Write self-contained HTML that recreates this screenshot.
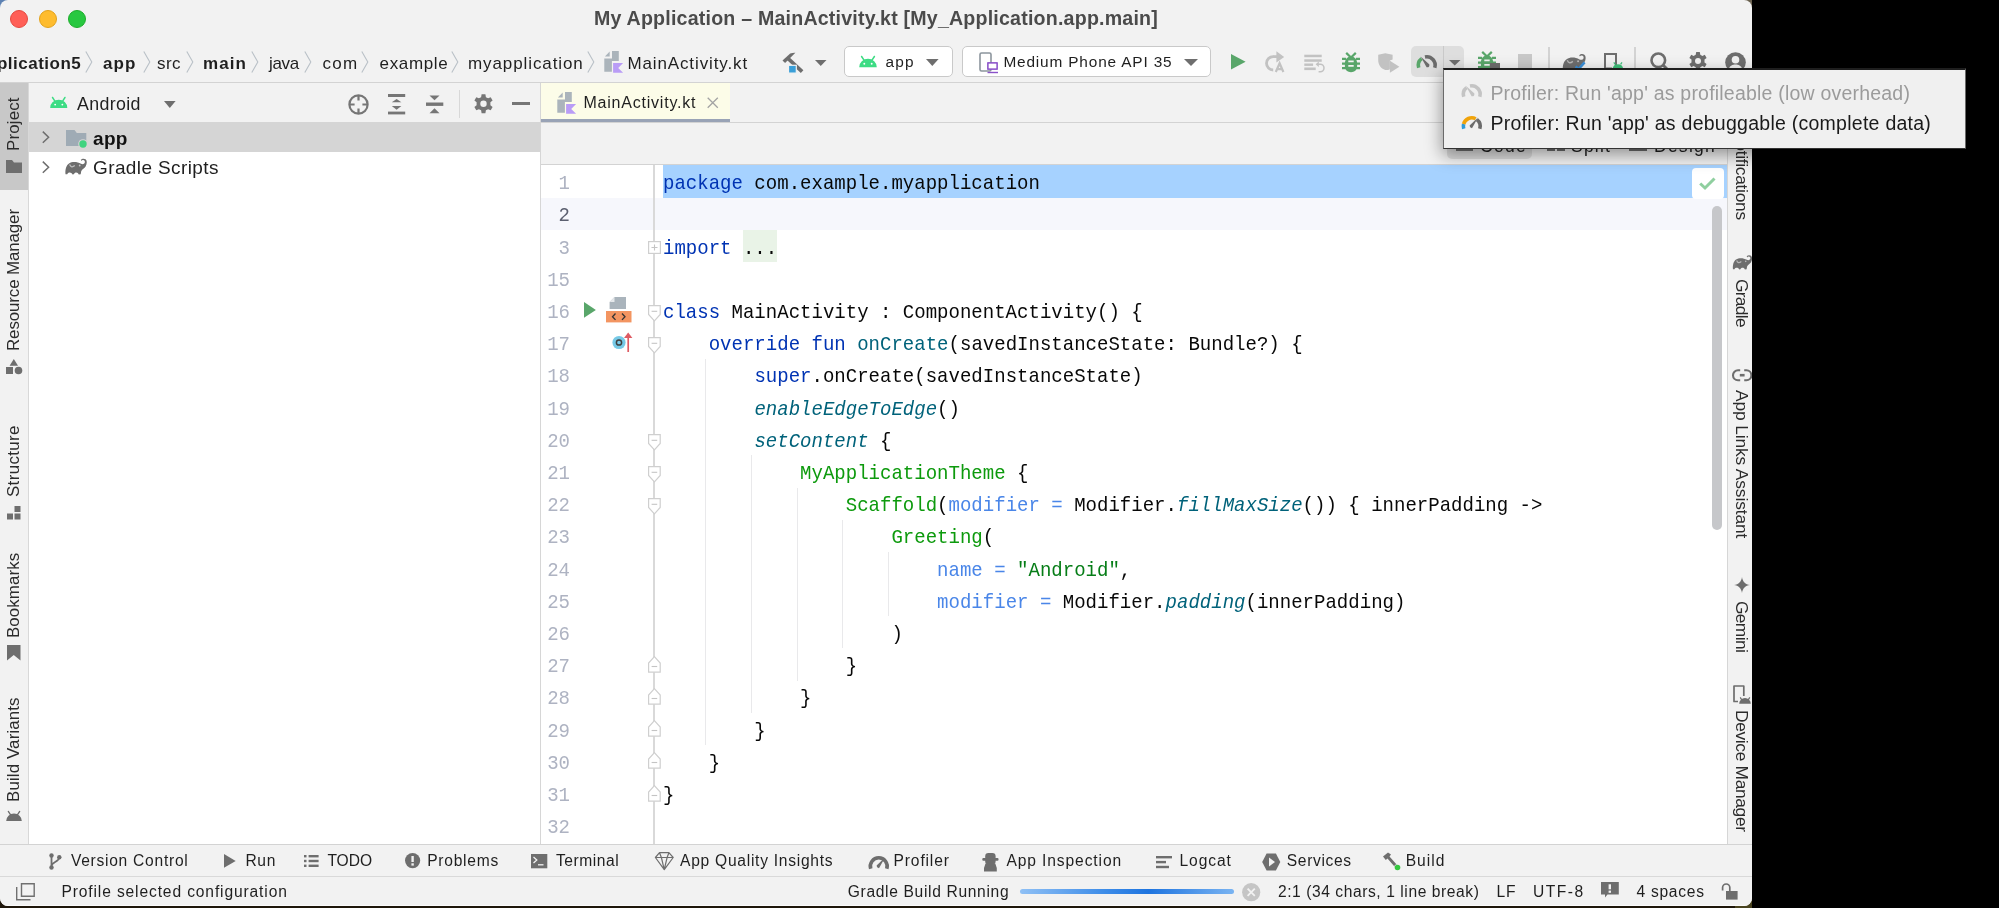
<!DOCTYPE html>
<html><head><meta charset="utf-8">
<style>
*{box-sizing:border-box;margin:0;padding:0}
html,body{width:1999px;height:908px;overflow:hidden;background:#000}
body{position:relative;font-family:"Liberation Sans",sans-serif;color:#1f1f1f}
.a{position:absolute;white-space:nowrap}
svg.a{overflow:visible}
#win{will-change:transform;position:absolute;left:0;top:0;width:1752px;height:906px;background:#f2f2f2;border-radius:8px;overflow:hidden}
.code{position:absolute;font-family:"Liberation Mono",monospace;font-size:19.05px;line-height:32.2px;white-space:pre;color:#080808;transform:scaleY(1.1);transform-origin:0 21.1px}
.kw{color:#0033b3}.fn{color:#00627a}.it{font-style:italic}.cm{color:#0d9a0d}.na{color:#4a86e8}.st{color:#067d17}
.ln{position:absolute;left:520px;width:50px;text-align:right;font-family:"Liberation Mono",monospace;font-size:19.05px;line-height:32.2px;color:#aeb3c2;transform:scaleY(1.1);transform-origin:0 21.1px}
.guide{position:absolute;width:1px;background:#e8e8ea}
</style></head><body>
<div class="a" style="left:0;top:0;width:1752px;height:908px;background:#1f170b"></div><div class="a" style="left:1700px;top:0;width:52px;height:30px;background:#6b6250"></div><div class="a" style="left:1735px;top:880px;width:17px;height:28px;background:#4a4420"></div>
<div class="a" style="left:0;top:0;width:40px;height:30px;background:#5d82b3"></div>
<div id="win">
<div class="a" style="left:10px;top:10px;width:18px;height:18px;border-radius:50%;background:#ff5f57;border:1px solid #e5483f"></div><div class="a" style="left:39px;top:10px;width:18px;height:18px;border-radius:50%;background:#febc2e;border:1px solid #e3a21a"></div><div class="a" style="left:68px;top:10px;width:18px;height:18px;border-radius:50%;background:#28c840;border:1px solid #1dad2b"></div><div class="a" style="font:normal bold 19.6px/19.6px 'Liberation Sans';color:#4b4b4b;letter-spacing:0.208px;left:594.00px;top:9.00px;">My Application – MainActivity.kt [My_Application.app.main]</div><div class="a" style="left:0px;top:82px;width:1752px;height:1px;background:#d3d3d3;"></div><div class="a" style="font:normal bold 17px/17px 'Liberation Sans';color:#1f1f1f;letter-spacing:0.500px;left:-3.09px;top:55.00px;">plication5</div><svg class="a" style="left:85px;top:51px;" width="8" height="22" viewBox="0 0 8 22"><path d="M0.8 0.5L6.8 11.0L0.8 21.5" fill="none" stroke="#b9c0c7" stroke-width="1.1"/></svg><div class="a" style="font:normal bold 17px/17px 'Liberation Sans';color:#1f1f1f;letter-spacing:1.081px;left:103.00px;top:55.00px;">app</div><svg class="a" style="left:143px;top:51px;" width="8" height="22" viewBox="0 0 8 22"><path d="M0.8 0.5L6.8 11.0L0.8 21.5" fill="none" stroke="#b9c0c7" stroke-width="1.1"/></svg><div class="a" style="font:normal normal 17px/17px 'Liberation Sans';color:#1f1f1f;letter-spacing:0.419px;left:157.00px;top:55.00px;">src</div><svg class="a" style="left:186px;top:51px;" width="8" height="22" viewBox="0 0 8 22"><path d="M0.8 0.5L6.8 11.0L0.8 21.5" fill="none" stroke="#b9c0c7" stroke-width="1.1"/></svg><div class="a" style="font:normal bold 17px/17px 'Liberation Sans';color:#1f1f1f;letter-spacing:1.069px;left:203.00px;top:55.00px;">main</div><svg class="a" style="left:251px;top:51px;" width="8" height="22" viewBox="0 0 8 22"><path d="M0.8 0.5L6.8 11.0L0.8 21.5" fill="none" stroke="#b9c0c7" stroke-width="1.1"/></svg><div class="a" style="font:normal normal 17px/17px 'Liberation Sans';color:#1f1f1f;letter-spacing:-0.344px;left:269.00px;top:55.00px;">java</div><svg class="a" style="left:304px;top:51px;" width="8" height="22" viewBox="0 0 8 22"><path d="M0.8 0.5L6.8 11.0L0.8 21.5" fill="none" stroke="#b9c0c7" stroke-width="1.1"/></svg><div class="a" style="font:normal normal 17px/17px 'Liberation Sans';color:#1f1f1f;letter-spacing:1.273px;left:322.40px;top:55.00px;">com</div><svg class="a" style="left:361.4px;top:51px;" width="8" height="22" viewBox="0 0 8 22"><path d="M0.8 0.5L6.8 11.0L0.8 21.5" fill="none" stroke="#b9c0c7" stroke-width="1.1"/></svg><div class="a" style="font:normal normal 17px/17px 'Liberation Sans';color:#1f1f1f;letter-spacing:0.650px;left:379.60px;top:55.00px;">example</div><svg class="a" style="left:450.5px;top:51px;" width="8" height="22" viewBox="0 0 8 22"><path d="M0.8 0.5L6.8 11.0L0.8 21.5" fill="none" stroke="#b9c0c7" stroke-width="1.1"/></svg><div class="a" style="font:normal normal 17px/17px 'Liberation Sans';color:#1f1f1f;letter-spacing:0.901px;left:468.00px;top:55.00px;">myapplication</div><svg class="a" style="left:587px;top:51px;" width="8" height="22" viewBox="0 0 8 22"><path d="M0.8 0.5L6.8 11.0L0.8 21.5" fill="none" stroke="#b9c0c7" stroke-width="1.1"/></svg><svg class="a" style="left:604px;top:51px;" width="20" height="23" viewBox="0 0 20 23"><path d="M0.9 5.6L5.7 0.5V5.6Z" fill="#abb4bb"/><path d="M8 0.1H14.8V10H7.9V20.8H0.3V7.6H8Z" fill="#abb4bb"/><path d="M9.1 12.1H19.1L14.2 17L19.1 21.8H9.1Z" fill="#b99cf6"/></svg><div class="a" style="font:normal normal 17px/17px 'Liberation Sans';color:#1f1f1f;letter-spacing:0.882px;left:627.40px;top:55.00px;">MainActivity.kt</div><svg class="a" style="left:782px;top:52px;" width="22" height="22" viewBox="0 0 22 22"><path d="M0.5 8.5L8.2 1.4Q10.5 0.6 13.4 0.7L3.1 10.9Z" fill="#6e6e6e"/><path d="M6.6 4.6L21.4 18.3L18.8 21.1L4.2 7.3Z" fill="#6e6e6e"/><rect x="6.5" y="13.3" width="7.8" height="7.8" fill="#3a9fd8" stroke="#f2f2f2" stroke-width="1.2"/></svg><svg class="a" style="left:815px;top:59.5px;" width="11.5" height="6" viewBox="0 0 11.5 6"><path d="M0 0H11.5L5.75 6Z" fill="#6e6e6e"/></svg><div class="a" style="left:843.5px;top:45.5px;width:109px;height:31.5px;background:#fff;border:1px solid #c9c9c9;border-radius:5px"></div><svg class="a" style="left:859px;top:55.8px;" width="18" height="12.0" viewBox="0 0 18 12"><path d="M0.2 11.2A8.8 8.4 0 0 1 17.8 11.2Z" fill="#3ddc84"/><path d="M2.6 0.5L5 4.2M15.4 0.5L13 4.2" stroke="#3ddc84" stroke-width="1.5" stroke-linecap="round"/><circle cx="5.3" cy="7.8" r="0.95" fill="#fff"/><circle cx="12.7" cy="7.8" r="0.95" fill="#fff"/></svg><div class="a" style="font:normal normal 15.4px/15.4px 'Liberation Sans';color:#1f1f1f;letter-spacing:1.240px;left:885.40px;top:54.00px;">app</div><svg class="a" style="left:925.7px;top:59px;" width="12.6" height="7" viewBox="0 0 12.6 7"><path d="M0 0H12.6L6.3 7Z" fill="#6e6e6e"/></svg><div class="a" style="left:962px;top:45.5px;width:249px;height:31.5px;background:#fff;border:1px solid #c9c9c9;border-radius:5px"></div><svg class="a" style="left:979px;top:52px;" width="20" height="22" viewBox="0 0 20 22"><rect x="1" y="1" width="11" height="18" rx="1.5" fill="none" stroke="#8c959d" stroke-width="1.6"/><rect x="9" y="11" width="9" height="6" fill="#f2f2f2" stroke="#8a52c9" stroke-width="1.4"/><path d="M8.5 20.5H19" stroke="#8a52c9" stroke-width="1.4"/><rect x="9" y="11" width="9" height="6" fill="#fff" stroke="#8a52c9" stroke-width="1.3"/></svg><div class="a" style="font:normal normal 15.4px/15.4px 'Liberation Sans';color:#1f1f1f;letter-spacing:0.837px;left:1003.40px;top:54.00px;">Medium Phone API 35</div><svg class="a" style="left:1184px;top:59px;" width="14" height="7" viewBox="0 0 14 7"><path d="M0 0H14L7.0 7Z" fill="#6e6e6e"/></svg><div class="a" style="left:0px;top:83px;width:28px;height:761px;background:#f2f2f2;"></div><div class="a" style="left:0px;top:83px;width:28.5px;height:106.5px;background:#c8c8c8;"></div><div class="a" style="left:28px;top:83px;width:1.6px;height:762px;background:#d8d8d8;"></div><div class="a" style="font:normal normal 16.9px/16.9px 'Liberation Sans';color:#2b2b2b;letter-spacing:0.154px;left:6.00px;top:150.50px;transform:rotate(-90deg);transform-origin:0 0;">Project</div><svg class="a" style="left:6px;top:159.7px;" width="16" height="13" viewBox="0 0 16 13"><path d="M0 0H6L8 2.5H16V13H0Z" fill="#6e6e6e"/></svg><div class="a" style="font:normal normal 16.9px/16.9px 'Liberation Sans';color:#2b2b2b;letter-spacing:-0.108px;left:6.00px;top:351.00px;transform:rotate(-90deg);transform-origin:0 0;">Resource Manager</div><svg class="a" style="left:5.7px;top:359.2px;" width="17" height="16" viewBox="0 0 17 16"><path d="M7.8 0L12 6.8H3.6Z" fill="#6e6e6e"/><rect x="0" y="8" width="7" height="7" fill="#6e6e6e"/><circle cx="12.5" cy="11.5" r="3.8" fill="#6e6e6e"/></svg><div class="a" style="font:normal normal 16.9px/16.9px 'Liberation Sans';color:#2b2b2b;letter-spacing:0.358px;left:6.00px;top:497.00px;transform:rotate(-90deg);transform-origin:0 0;">Structure</div><svg class="a" style="left:7.2px;top:506.2px;" width="14" height="14" viewBox="0 0 14 14"><rect x="0" y="7.5" width="6" height="6" fill="#6e6e6e"/><rect x="7.5" y="7.5" width="6" height="6" fill="#6e6e6e"/><rect x="7.5" y="0" width="6" height="6" fill="#6e6e6e"/></svg><div class="a" style="font:normal normal 16.9px/16.9px 'Liberation Sans';color:#2b2b2b;letter-spacing:0.083px;left:6.00px;top:637.70px;transform:rotate(-90deg);transform-origin:0 0;">Bookmarks</div><svg class="a" style="left:7.2px;top:645.3px;" width="14" height="16" viewBox="0 0 14 16"><path d="M0 0H13.5V15.5L6.75 10L0 15.5Z" fill="#6e6e6e"/></svg><div class="a" style="font:normal normal 16.9px/16.9px 'Liberation Sans';color:#2b2b2b;letter-spacing:0.122px;left:6.00px;top:801.60px;transform:rotate(-90deg);transform-origin:0 0;">Build Variants</div><svg class="a" style="left:5.9px;top:810.6px;" width="16" height="10.666666666666666" viewBox="0 0 18 12"><path d="M0.2 11.2A8.8 8.4 0 0 1 17.8 11.2Z" fill="#6e6e6e"/><path d="M2.6 0.5L5 4.2M15.4 0.5L13 4.2" stroke="#6e6e6e" stroke-width="1.5" stroke-linecap="round"/><circle cx="5.3" cy="7.8" r="0.95" fill="#6e6e6e"/><circle cx="12.7" cy="7.8" r="0.95" fill="#6e6e6e"/></svg><div class="a" style="left:29px;top:83px;width:511px;height:39px;background:#f2f2f2;"></div><div class="a" style="left:29px;top:122px;width:511px;height:722px;background:#ffffff;"></div><div class="a" style="left:540px;top:83px;width:1px;height:762px;background:#d6d6d6;"></div><svg class="a" style="left:49.5px;top:96.6px;" width="17.5" height="11.666666666666666" viewBox="0 0 18 12"><path d="M0.2 11.2A8.8 8.4 0 0 1 17.8 11.2Z" fill="#3ddc84"/><path d="M2.6 0.5L5 4.2M15.4 0.5L13 4.2" stroke="#3ddc84" stroke-width="1.5" stroke-linecap="round"/><circle cx="5.3" cy="7.8" r="0.95" fill="#fff"/><circle cx="12.7" cy="7.8" r="0.95" fill="#fff"/></svg><div class="a" style="font:normal normal 17.8px/17.8px 'Liberation Sans';color:#1f1f1f;letter-spacing:0.367px;left:77.00px;top:96.00px;">Android</div><svg class="a" style="left:164px;top:101px;" width="11.6" height="7" viewBox="0 0 11.6 7"><path d="M0 0H11.6L5.8 7Z" fill="#6e6e6e"/></svg><svg class="a" style="left:348px;top:93.5px;" width="21" height="21" viewBox="0 0 21 21"><circle cx="10.5" cy="10.5" r="9.1" fill="none" stroke="#767676" stroke-width="2.2"/><path d="M10.5 1.2V6.6M10.5 14.4V19.8M1.2 10.5H6.6M14.4 10.5H19.8" stroke="#767676" stroke-width="2.2"/></svg><svg class="a" style="left:388px;top:93.5px;" width="18" height="21" viewBox="0 0 18 21"><rect x="0" y="0" width="17.2" height="3" fill="#767676"/><rect x="0" y="17.6" width="17.2" height="2.8" fill="#767676"/><path d="M3.8 8.3L8.6 4.9L13.4 8.3Z" fill="#767676"/><path d="M3.8 11.9L8.6 15.8L13.4 11.9Z" fill="#767676"/></svg><svg class="a" style="left:426px;top:94.5px;" width="18" height="19" viewBox="0 0 18 19"><path d="M3.5 0.4H13.5L8.5 5.2Z" fill="#767676"/><rect x="0" y="7.5" width="17.3" height="3.4" fill="#767676"/><path d="M3.5 18.3H13.5L8.5 13.3Z" fill="#767676"/></svg><div class="a" style="left:458.5px;top:89.7px;width:1.2px;height:28.3px;background:#d8d8d8;"></div><svg class="a" style="left:473.5px;top:94px;" width="19" height="19.5" viewBox="0 0 19 19.5"><g transform="translate(9.5 9.75)" fill="#767676"><path d="M-1.9 -9.4H1.9L2.4 -6.6L4.6 -5.4L7.2 -6.6L9.1 -3.3L6.9 -1.5V1.5L9.1 3.3L7.2 6.6L4.6 5.4L2.4 6.6L1.9 9.4H-1.9L-2.4 6.6L-4.6 5.4L-7.2 6.6L-9.1 3.3L-6.9 1.5V-1.5L-9.1 -3.3L-7.2 -6.6L-4.6 -5.4L-2.4 -6.6Z"/><circle r="3.2" fill="#f2f2f2"/></g></svg><div class="a" style="left:512px;top:102px;width:17.5px;height:3.4px;background:#767676;"></div><div class="a" style="left:29px;top:122px;width:511px;height:30px;background:#d5d5d5;"></div><svg class="a" style="left:42px;top:130.8px;" width="8" height="12.4" viewBox="0 0 8 12.4"><path d="M0.8 0.6L6.6 6.2L0.8 11.8" fill="none" stroke="#6e6e6e" stroke-width="1.5"/></svg><svg class="a" style="left:65.7px;top:130px;" width="21" height="17" viewBox="0 0 21 17"><path d="M0 0H8.5L10.8 3H20.3V16H0Z" fill="#9fabb5"/><circle cx="17" cy="14" r="4.8" fill="#d5d5d5"/><circle cx="17" cy="14" r="3.7" fill="#3fd37f"/></svg><div class="a" style="font:normal bold 19px/19px 'Liberation Sans';color:#111;letter-spacing:0.314px;left:93.00px;top:129.00px;">app</div><svg class="a" style="left:42px;top:160.7px;" width="8" height="12.4" viewBox="0 0 8 12.4"><path d="M0.8 0.6L6.6 6.2L0.8 11.8" fill="none" stroke="#6e6e6e" stroke-width="1.5"/></svg><svg class="a" style="left:60px;top:154px;" width="32.0" height="24.0" viewBox="0 0 32.0 24.0"><g transform="scale(1.0)"><path d="M5.5 20.3C5 15 6.5 11 9 9.5C12 7.5 17 7.5 21 9.8C22.5 10.5 24.3 10.2 24.8 8.6C25.2 7.2 24.3 6 23 6.1C22.2 6.2 21.7 6.6 21.4 7.1L20.8 5.8C21.9 4.6 24 4.2 25.6 5.3C27.2 6.6 27.2 9.6 25.6 12.5C24.5 14.3 22.2 15.2 21.2 17.2L20.7 20.3L18.8 20.6C18 18.2 15 17.8 13.8 20.3L12.6 20.6C11.6 18.2 8.2 17.8 7.2 20.3Z" fill="#6e6e6e"/><path d="M9.6 10.6Q11.2 14.6 14.8 11.6" fill="none" stroke="#ffffff" stroke-opacity="0.55" stroke-width="1.3"/><circle cx="19.7" cy="11.5" r="0.9" fill="#ffffff" fill-opacity="0.6"/></g></svg><div class="a" style="font:normal normal 19px/19px 'Liberation Sans';color:#1f1f1f;letter-spacing:0.387px;left:93.00px;top:158.00px;">Gradle Scripts</div><div class="a" style="left:541px;top:83px;width:1186px;height:39px;background:#f2f2f2;"></div><div class="a" style="left:541px;top:83px;width:189px;height:36px;background:#fcfce8;"></div><div class="a" style="left:541px;top:118.6px;width:189px;height:3.8px;background:#99a3b6;"></div><div class="a" style="left:541px;top:122px;width:1186px;height:1px;background:#d3d3d3;"></div><svg class="a" style="left:557.3px;top:92px;" width="20" height="23" viewBox="0 0 20 23"><path d="M0.9 5.6L5.7 0.5V5.6Z" fill="#abb4bb"/><path d="M8 0.1H14.8V10H7.9V20.8H0.3V7.6H8Z" fill="#abb4bb"/><path d="M9.1 12.1H19.1L14.2 17L19.1 21.8H9.1Z" fill="#b99cf6"/></svg><div class="a" style="font:normal normal 16px/16px 'Liberation Sans';color:#1f1f1f;letter-spacing:0.778px;left:583.50px;top:95.00px;">MainActivity.kt</div><svg class="a" style="left:707px;top:97px;" width="11.5" height="11.5" viewBox="0 0 11.5 11.5"><path d="M0.7 0.7L10.8 10.8M10.8 0.7L0.7 10.8" stroke="#a3a3a3" stroke-width="1.3"/></svg><div class="a" style="left:541px;top:123px;width:1186px;height:41px;background:#f2f2f2;"></div><div class="a" style="left:541px;top:164px;width:1186px;height:1px;background:#d3d3d3;"></div><div class="a" style="left:1447.3px;top:125px;width:84.6px;height:33.8px;background:#dcdcdc;border-radius:5px"></div><div class="a" style="left:1456px;top:145px;width:17px;height:6px;background:#6e6e6e;"></div><div class="a" style="font:normal normal 17.5px/17.5px 'Liberation Sans';color:#1f1f1f;letter-spacing:1.299px;left:1480.00px;top:138.00px;">Code</div><div class="a" style="left:1547px;top:147px;width:8px;height:4px;background:#6e6e6e;"></div><div class="a" style="left:1557px;top:147px;width:8px;height:4px;background:#6e6e6e;"></div><div class="a" style="font:normal normal 17.5px/17.5px 'Liberation Sans';color:#1f1f1f;letter-spacing:1.205px;left:1571.00px;top:138.00px;">Split</div><div class="a" style="left:1629px;top:145px;width:18px;height:6px;background:#6e6e6e;"></div><div class="a" style="font:normal normal 17.5px/17.5px 'Liberation Sans';color:#1f1f1f;letter-spacing:1.252px;left:1654.00px;top:138.00px;">Design</div><div class="a" style="left:541px;top:165px;width:1186px;height:680px;background:#ffffff;"></div><div class="a" style="left:541px;top:197.7px;width:1186px;height:32.2px;background:#f6f7fc;"></div><div class="a" style="left:663px;top:165px;width:1064px;height:32.7px;background:#a6d2ff;"></div><div class="a" style="left:743px;top:229.9px;width:34px;height:32.2px;background:#e9f3e7;"></div><div class="a" style="left:653.3px;top:165px;width:1.4px;height:680px;background:#d9d9d9;"></div><div class="a" style="left:705.2px;top:358.70000000000005px;width:1px;height:386.4px;background:#e9e9eb;"></div><div class="a" style="left:750.9px;top:455.3px;width:1px;height:257.6000000000001px;background:#e9e9eb;"></div><div class="a" style="left:796.7px;top:487.5px;width:1px;height:193.20000000000005px;background:#e9e9eb;"></div><div class="a" style="left:842.4px;top:519.7px;width:1px;height:128.79999999999995px;background:#e9e9eb;"></div><div class="a" style="left:888.1px;top:551.9000000000001px;width:1px;height:64.39999999999998px;background:#e9e9eb;"></div><div class="ln" style="top:168.10px;color:#aeb3c2">1</div><div class="code" style="left:663px;top:168.10px"><span class="kw">package</span> com.example.myapplication</div><div class="ln" style="top:200.30px;color:#5c6070">2</div><div class="ln" style="top:232.50px;color:#aeb3c2">3</div><div class="code" style="left:663px;top:232.50px"><span class="kw">import</span> ...</div><div class="ln" style="top:264.70px;color:#aeb3c2">15</div><div class="ln" style="top:296.90px;color:#aeb3c2">16</div><div class="code" style="left:663px;top:296.90px"><span class="kw">class</span> MainActivity : ComponentActivity() {</div><div class="ln" style="top:329.10px;color:#aeb3c2">17</div><div class="code" style="left:663px;top:329.10px">    <span class="kw">override fun</span> <span class="fn">onCreate</span>(savedInstanceState: Bundle?) {</div><div class="ln" style="top:361.30px;color:#aeb3c2">18</div><div class="code" style="left:663px;top:361.30px">        <span class="kw">super</span>.onCreate(savedInstanceState)</div><div class="ln" style="top:393.50px;color:#aeb3c2">19</div><div class="code" style="left:663px;top:393.50px">        <span class="fn it">enableEdgeToEdge</span>()</div><div class="ln" style="top:425.70px;color:#aeb3c2">20</div><div class="code" style="left:663px;top:425.70px">        <span class="fn it">setContent</span> {</div><div class="ln" style="top:457.90px;color:#aeb3c2">21</div><div class="code" style="left:663px;top:457.90px">            <span class="cm">MyApplicationTheme</span> {</div><div class="ln" style="top:490.10px;color:#aeb3c2">22</div><div class="code" style="left:663px;top:490.10px">                <span class="cm">Scaffold</span>(<span class="na">modifier =</span> Modifier.<span class="fn it">fillMaxSize</span>()) { innerPadding -&gt;</div><div class="ln" style="top:522.30px;color:#aeb3c2">23</div><div class="code" style="left:663px;top:522.30px">                    <span class="cm">Greeting</span>(</div><div class="ln" style="top:554.50px;color:#aeb3c2">24</div><div class="code" style="left:663px;top:554.50px">                        <span class="na">name =</span> <span class="st">"Android"</span>,</div><div class="ln" style="top:586.70px;color:#aeb3c2">25</div><div class="code" style="left:663px;top:586.70px">                        <span class="na">modifier =</span> Modifier.<span class="fn it">padding</span>(innerPadding)</div><div class="ln" style="top:618.90px;color:#aeb3c2">26</div><div class="code" style="left:663px;top:618.90px">                    )</div><div class="ln" style="top:651.10px;color:#aeb3c2">27</div><div class="code" style="left:663px;top:651.10px">                }</div><div class="ln" style="top:683.30px;color:#aeb3c2">28</div><div class="code" style="left:663px;top:683.30px">            }</div><div class="ln" style="top:715.50px;color:#aeb3c2">29</div><div class="code" style="left:663px;top:715.50px">        }</div><div class="ln" style="top:747.70px;color:#aeb3c2">30</div><div class="code" style="left:663px;top:747.70px">    }</div><div class="ln" style="top:779.90px;color:#aeb3c2">31</div><div class="code" style="left:663px;top:779.90px">}</div><div class="ln" style="top:812.10px;color:#aeb3c2">32</div><svg class="a" style="left:647.8px;top:241.2px;" width="13" height="13" viewBox="0 0 13 13"><rect x="0.6" y="0.6" width="11.8" height="11.8" fill="#fff" stroke="#cfcfcf" stroke-width="1.2"/><path d="M3.5 6.5H9.5M6.5 3.5V9.5" stroke="#c4c4c4" stroke-width="1.1"/></svg><svg class="a" style="left:647.8px;top:305.0px;" width="13" height="17" viewBox="0 0 13 17"><path d="M0.6 0.6H12.2V9.5L6.4 15.8L0.6 9.5Z" fill="#fff" stroke="#cfcfcf" stroke-width="1.2"/><path d="M3.6 6.3H9.2" stroke="#c4c4c4" stroke-width="1.1"/></svg><svg class="a" style="left:647.8px;top:337.2px;" width="13" height="17" viewBox="0 0 13 17"><path d="M0.6 0.6H12.2V9.5L6.4 15.8L0.6 9.5Z" fill="#fff" stroke="#cfcfcf" stroke-width="1.2"/><path d="M3.6 6.3H9.2" stroke="#c4c4c4" stroke-width="1.1"/></svg><svg class="a" style="left:647.8px;top:433.8px;" width="13" height="17" viewBox="0 0 13 17"><path d="M0.6 0.6H12.2V9.5L6.4 15.8L0.6 9.5Z" fill="#fff" stroke="#cfcfcf" stroke-width="1.2"/><path d="M3.6 6.3H9.2" stroke="#c4c4c4" stroke-width="1.1"/></svg><svg class="a" style="left:647.8px;top:466.0px;" width="13" height="17" viewBox="0 0 13 17"><path d="M0.6 0.6H12.2V9.5L6.4 15.8L0.6 9.5Z" fill="#fff" stroke="#cfcfcf" stroke-width="1.2"/><path d="M3.6 6.3H9.2" stroke="#c4c4c4" stroke-width="1.1"/></svg><svg class="a" style="left:647.8px;top:498.2px;" width="13" height="17" viewBox="0 0 13 17"><path d="M0.6 0.6H12.2V9.5L6.4 15.8L0.6 9.5Z" fill="#fff" stroke="#cfcfcf" stroke-width="1.2"/><path d="M3.6 6.3H9.2" stroke="#c4c4c4" stroke-width="1.1"/></svg><svg class="a" style="left:647.8px;top:655.7px;" width="13" height="17" viewBox="0 0 13 17"><path d="M0.6 16.2H12.2V7L6.4 0.7L0.6 7Z" fill="#fff" stroke="#cfcfcf" stroke-width="1.2"/><path d="M3.6 10.5H9.2" stroke="#c4c4c4" stroke-width="1.1"/></svg><svg class="a" style="left:647.8px;top:687.9000000000001px;" width="13" height="17" viewBox="0 0 13 17"><path d="M0.6 16.2H12.2V7L6.4 0.7L0.6 7Z" fill="#fff" stroke="#cfcfcf" stroke-width="1.2"/><path d="M3.6 10.5H9.2" stroke="#c4c4c4" stroke-width="1.1"/></svg><svg class="a" style="left:647.8px;top:720.1000000000001px;" width="13" height="17" viewBox="0 0 13 17"><path d="M0.6 16.2H12.2V7L6.4 0.7L0.6 7Z" fill="#fff" stroke="#cfcfcf" stroke-width="1.2"/><path d="M3.6 10.5H9.2" stroke="#c4c4c4" stroke-width="1.1"/></svg><svg class="a" style="left:647.8px;top:752.3000000000001px;" width="13" height="17" viewBox="0 0 13 17"><path d="M0.6 16.2H12.2V7L6.4 0.7L0.6 7Z" fill="#fff" stroke="#cfcfcf" stroke-width="1.2"/><path d="M3.6 10.5H9.2" stroke="#c4c4c4" stroke-width="1.1"/></svg><svg class="a" style="left:647.8px;top:784.5000000000001px;" width="13" height="17" viewBox="0 0 13 17"><path d="M0.6 16.2H12.2V7L6.4 0.7L0.6 7Z" fill="#fff" stroke="#cfcfcf" stroke-width="1.2"/><path d="M3.6 10.5H9.2" stroke="#c4c4c4" stroke-width="1.1"/></svg><svg class="a" style="left:584.3px;top:302.3px;" width="12" height="16" viewBox="0 0 12 16"><path d="M0 0L11.9 7.9L0 15.8Z" fill="#59a66a"/></svg><svg class="a" style="left:605.8px;top:297px;" width="26" height="26" viewBox="0 0 26 26"><path d="M8.5 0H20V12H3.6V4.9Z" fill="#aab4bc"/><path d="M3.6 4.9L8.5 0V4.9Z" fill="#e6e9ec"/><rect x="0" y="14" width="25.5" height="11.4" fill="#f39561"/><path d="M9.5 16.5L6.5 19.7L9.5 22.9M16 16.5L19 19.7L16 22.9" fill="none" stroke="#333" stroke-width="1.3"/></svg><svg class="a" style="left:611.5px;top:332px;" width="22" height="21" viewBox="0 0 22 21"><circle cx="7" cy="10.5" r="6.6" fill="#76c9e6"/><circle cx="7" cy="10.5" r="2.6" fill="none" stroke="#3f3f3f" stroke-width="1.5"/><path d="M16.2 20V1.8" stroke="#de5b63" stroke-width="1.7"/><path d="M12 6L16.2 0.6L20.4 6Z" fill="#de5b63"/></svg><div class="a" style="left:1692px;top:168.4px;width:31.6px;height:31px;background:#fff;border-radius:4px"></div><svg class="a" style="left:1699px;top:177px;" width="17" height="13" viewBox="0 0 17 13"><path d="M1.2 6.5L6 11L15.5 1.5" fill="none" stroke="#8fcf9f" stroke-width="3"/></svg><div class="a" style="left:1712.3px;top:206px;width:10px;height:323.5px;background:#c6c7ca;border-radius:5px"></div><div class="a" style="left:541px;top:844px;width:1186px;height:1px;background:#d3d3d3;"></div><div class="a" style="left:1727px;top:83px;width:25px;height:761px;background:#f2f2f2;"></div><div class="a" style="left:1727px;top:83px;width:1px;height:761px;background:#d6d6d6;"></div><div class="a" style="font:normal normal 17.4px/17.4px 'Liberation Sans';color:#2b2b2b;letter-spacing:-0.300px;left:1750.00px;top:128.87px;transform:rotate(90deg);transform-origin:0 0;">Notifications</div><svg class="a" style="left:1727.5px;top:250.5px;" width="28.8" height="21.6" viewBox="0 0 28.8 21.6"><g transform="scale(0.9)"><path d="M5.5 20.3C5 15 6.5 11 9 9.5C12 7.5 17 7.5 21 9.8C22.5 10.5 24.3 10.2 24.8 8.6C25.2 7.2 24.3 6 23 6.1C22.2 6.2 21.7 6.6 21.4 7.1L20.8 5.8C21.9 4.6 24 4.2 25.6 5.3C27.2 6.6 27.2 9.6 25.6 12.5C24.5 14.3 22.2 15.2 21.2 17.2L20.7 20.3L18.8 20.6C18 18.2 15 17.8 13.8 20.3L12.6 20.6C11.6 18.2 8.2 17.8 7.2 20.3Z" fill="#6e6e6e"/><path d="M9.6 10.6Q11.2 14.6 14.8 11.6" fill="none" stroke="#f2f2f2" stroke-opacity="0.55" stroke-width="1.3"/><circle cx="19.7" cy="11.5" r="0.9" fill="#f2f2f2" fill-opacity="0.6"/></g></svg><div class="a" style="font:normal normal 17.4px/17.4px 'Liberation Sans';color:#2b2b2b;letter-spacing:-0.725px;left:1750.00px;top:279.10px;transform:rotate(90deg);transform-origin:0 0;">Gradle</div><svg class="a" style="left:1732.8px;top:368.6px;" width="19" height="13" viewBox="0 0 19 13"><path d="M7.2 1.2H5A5 5 0 0 0 5 11.2H7.2M11.2 1.2H13.4A5 5 0 0 1 13.4 11.2H11.2" fill="none" stroke="#6e6e6e" stroke-width="2.1"/><path d="M6.8 6.2H11.6" stroke="#6e6e6e" stroke-width="2.6"/></svg><div class="a" style="font:normal normal 17.4px/17.4px 'Liberation Sans';color:#2b2b2b;letter-spacing:-0.140px;left:1750.00px;top:389.70px;transform:rotate(90deg);transform-origin:0 0;">App Links Assistant</div><svg class="a" style="left:1734px;top:577px;" width="16" height="16" viewBox="0 0 16 16"><path d="M8 0C8.6 4.6 11.4 7.4 16 8C11.4 8.6 8.6 11.4 8 16C7.4 11.4 4.6 8.6 0 8C4.6 7.4 7.4 4.6 8 0Z" fill="#6e6e6e"/></svg><div class="a" style="font:normal normal 17.4px/17.4px 'Liberation Sans';color:#2b2b2b;letter-spacing:-0.664px;left:1750.00px;top:600.80px;transform:rotate(90deg);transform-origin:0 0;">Gemini</div><svg class="a" style="left:1732.8px;top:685px;" width="19" height="20" viewBox="0 0 19 20"><path d="M10.8 11V1H1V16.5H5" fill="none" stroke="#6e6e6e" stroke-width="1.7" stroke-linejoin="round"/><path d="M6.2 18.8A5.8 5.8 0 0 1 17.8 18.8Z" fill="#6e6e6e"/><path d="M7.2 12.4L8.8 14.8M16.8 12.4L15.2 14.8" stroke="#6e6e6e" stroke-width="1.2"/></svg><div class="a" style="font:normal normal 17.4px/17.4px 'Liberation Sans';color:#2b2b2b;letter-spacing:-0.356px;left:1750.00px;top:710.30px;transform:rotate(90deg);transform-origin:0 0;">Device Manager</div><div class="a" style="left:0px;top:844px;width:1752px;height:1px;background:#d3d3d3;"></div><div class="a" style="left:0px;top:845px;width:1752px;height:60px;background:#f2f2f2;"></div><div class="a" style="left:0px;top:875.5px;width:1752px;height:1.6px;background:#d9d9d9;"></div><svg class="a" style="left:48.5px;top:853px;" width="13" height="17" viewBox="0 0 13 17"><circle cx="2.5" cy="2.5" r="2.2" fill="#6e6e6e"/><circle cx="2.5" cy="14.5" r="2.2" fill="#6e6e6e"/><circle cx="10.3" cy="4.3" r="2.2" fill="#6e6e6e"/><path d="M2.5 2.5V14.5M2.5 13C2.5 9 10.3 9 10.3 4.3" fill="none" stroke="#6e6e6e" stroke-width="1.8"/></svg><div class="a" style="font:normal normal 15.6px/15.6px 'Liberation Sans';color:#1f1f1f;letter-spacing:0.732px;left:70.90px;top:853.00px;">Version Control</div><svg class="a" style="left:223.7px;top:854.3px;" width="12" height="14" viewBox="0 0 12 14"><path d="M0 0L11.7 6.9L0 13.8Z" fill="#6e6e6e"/></svg><div class="a" style="font:normal normal 15.6px/15.6px 'Liberation Sans';color:#1f1f1f;letter-spacing:0.683px;left:245.40px;top:853.00px;">Run</div><svg class="a" style="left:304.4px;top:854.8px;" width="15" height="12.5" viewBox="0 0 15 12.5"><g fill="#6e6e6e"><rect x="0" y="0" width="2.5" height="2.4"/><rect x="0" y="4.8" width="2.5" height="2.4"/><rect x="0" y="9.6" width="2.5" height="2.4"/><rect x="4.6" y="0" width="10" height="2.4"/><rect x="4.6" y="4.8" width="10" height="2.4"/><rect x="4.6" y="9.6" width="10" height="2.4"/></g></svg><div class="a" style="font:normal normal 15.6px/15.6px 'Liberation Sans';color:#1f1f1f;letter-spacing:-0.011px;left:327.40px;top:853.00px;">TODO</div><svg class="a" style="left:404.5px;top:852.8px;" width="15.5" height="15.5" viewBox="0 0 15.5 15.5"><circle cx="7.6" cy="7.6" r="7.6" fill="#6e6e6e"/><rect x="6.4" y="3" width="2.4" height="6" fill="#f2f2f2"/><rect x="6.4" y="10.3" width="2.4" height="2.3" fill="#f2f2f2"/></svg><div class="a" style="font:normal normal 15.6px/15.6px 'Liberation Sans';color:#1f1f1f;letter-spacing:0.734px;left:427.20px;top:853.00px;">Problems</div><svg class="a" style="left:531.2px;top:853.5px;" width="16.5" height="14.5" viewBox="0 0 16.5 14.5"><rect x="0" y="0" width="16.3" height="14.3" fill="#6e6e6e"/><path d="M2.5 3L5.8 6L2.5 9" fill="none" stroke="#f2f2f2" stroke-width="1.3"/><path d="M7 10.8H12.5" stroke="#f2f2f2" stroke-width="1.3"/></svg><div class="a" style="font:normal normal 15.6px/15.6px 'Liberation Sans';color:#1f1f1f;letter-spacing:0.563px;left:555.90px;top:853.00px;">Terminal</div><svg class="a" style="left:654.5px;top:852.2px;" width="19" height="18.5" viewBox="0 0 19 18.5"><path d="M4.5 0.7H13.9L18.2 5.5L9.25 17.6L0.4 5.5Z M0.4 5.5H18.2 M4.5 0.7L6.4 5.5L9.25 17.6L12.1 5.5L13.9 0.7" fill="none" stroke="#6e6e6e" stroke-width="1.2" stroke-linejoin="round"/></svg><div class="a" style="font:normal normal 15.6px/15.6px 'Liberation Sans';color:#1f1f1f;letter-spacing:0.727px;left:680.10px;top:853.00px;">App Quality Insights</div><svg class="a" style="left:868px;top:853.8px;" width="22" height="15" viewBox="0 0 22 15"><path d="M2.72 14.66A8.4 8.4 0 1 1 18.78 14.66" fill="none" stroke="#6e6e6e" stroke-width="3.6"/><path d="M17 3.6L11 14.2Q8.4 13.6 8.6 11.4Z" fill="#6e6e6e"/></svg><div class="a" style="font:normal normal 15.6px/15.6px 'Liberation Sans';color:#1f1f1f;letter-spacing:0.843px;left:893.60px;top:853.00px;">Profiler</div><svg class="a" style="left:981.7px;top:852.5px;" width="17" height="19" viewBox="0 0 17 19"><g fill="#6e6e6e"><rect x="3.2" y="0" width="10.4" height="11.5" rx="3.2"/><rect x="0.3" y="5" width="16.2" height="2.8" rx="1"/><path d="M3.5 10.5H13.3L14.8 15V18.5H2V15Z"/></g></svg><div class="a" style="font:normal normal 15.6px/15.6px 'Liberation Sans';color:#1f1f1f;letter-spacing:0.893px;left:1006.40px;top:853.00px;">App Inspection</div><svg class="a" style="left:1155.9px;top:855.5px;" width="16.5" height="12.5" viewBox="0 0 16.5 12.5"><g fill="#6e6e6e"><rect x="0" y="0" width="16" height="2.4"/><rect x="0" y="4.9" width="10" height="2.4"/><rect x="0" y="9.8" width="13" height="2.4"/></g></svg><div class="a" style="font:normal normal 15.6px/15.6px 'Liberation Sans';color:#1f1f1f;letter-spacing:0.923px;left:1179.50px;top:853.00px;">Logcat</div><svg class="a" style="left:1261.6px;top:852.5px;" width="18.5" height="18" viewBox="0 0 18.5 18"><path d="M4.6 0.5H13.9L18.3 9L13.9 17.5H4.6L0.2 9Z" fill="#6e6e6e"/><path d="M7 4.6L13 9L7 13.4Z" fill="#f2f2f2"/></svg><div class="a" style="font:normal normal 15.6px/15.6px 'Liberation Sans';color:#1f1f1f;letter-spacing:0.643px;left:1286.80px;top:853.00px;">Services</div><svg class="a" style="left:1382px;top:852px;" width="19" height="19" viewBox="0 0 19 19"><path d="M1 4.5L6 0.5L9 2.5L7.5 4.5L15.5 13.5L13.3 15.5L5.5 6.5L3.8 8Z" fill="#6e6e6e"/><circle cx="15.5" cy="15.5" r="3.3" fill="#f2f2f2"/><circle cx="15.5" cy="15.5" r="2.8" fill="#35c73f"/></svg><div class="a" style="font:normal normal 15.6px/15.6px 'Liberation Sans';color:#1f1f1f;letter-spacing:0.999px;left:1405.70px;top:853.00px;">Build</div><svg class="a" style="left:15.6px;top:883px;" width="19" height="17.5" viewBox="0 0 19 17.5"><path d="M5.5 0.7H18.2V13.3H5.5Z" fill="none" stroke="#707070" stroke-width="1.4"/><path d="M0.7 4V16.8H14.5" fill="none" stroke="#707070" stroke-width="1.4"/></svg><div class="a" style="font:normal normal 15.6px/15.6px 'Liberation Sans';color:#1f1f1f;letter-spacing:0.870px;left:61.40px;top:884.00px;">Profile selected configuration</div><div class="a" style="font:normal normal 15.6px/15.6px 'Liberation Sans';color:#1f1f1f;letter-spacing:0.660px;left:847.80px;top:884.00px;">Gradle Build Running</div><div class="a" style="left:1020px;top:888.7px;width:213.6px;height:5.6px;border-radius:3px;background:linear-gradient(90deg,#8fc0f5 0%,#3d8ce8 40%,#1e74df 60%,#7ab4f2 100%)"></div><svg class="a" style="left:1242px;top:882.5px;" width="18.5" height="18.5" viewBox="0 0 18.5 18.5"><circle cx="9.2" cy="9.2" r="9.1" fill="#c5c5c5"/><path d="M5.6 5.6L12.8 12.8M12.8 5.6L5.6 12.8" stroke="#f2f2f2" stroke-width="1.8"/></svg><div class="a" style="font:normal normal 15.6px/15.6px 'Liberation Sans';color:#1f1f1f;letter-spacing:0.574px;left:1277.90px;top:884.00px;">2:1 (34 chars, 1 line break)</div><div class="a" style="font:normal normal 15.6px/15.6px 'Liberation Sans';color:#1f1f1f;letter-spacing:0.827px;left:1496.50px;top:884.00px;">LF</div><div class="a" style="font:normal normal 15.6px/15.6px 'Liberation Sans';color:#1f1f1f;letter-spacing:1.499px;left:1532.90px;top:884.00px;">UTF-8</div><svg class="a" style="left:1601px;top:882px;" width="18" height="15.5" viewBox="0 0 18 15.5"><path d="M0 0H17.8V12.5H6.5L4 15.4V12.5H0Z" fill="#6e6e6e"/><rect x="7.6" y="2.3" width="2.4" height="5" fill="#f2f2f2"/><rect x="7.6" y="8.6" width="2.4" height="2.2" fill="#f2f2f2"/></svg><div class="a" style="font:normal normal 15.6px/15.6px 'Liberation Sans';color:#1f1f1f;letter-spacing:0.741px;left:1636.40px;top:884.00px;">4 spaces</div><svg class="a" style="left:1720.5px;top:882.5px;" width="18" height="17" viewBox="0 0 18 17"><path d="M1.6 7.5V4.6A3.6 3.6 0 0 1 8.8 4.6V8" fill="none" stroke="#6e6e6e" stroke-width="1.7"/><rect x="5" y="8" width="11.6" height="8.6" fill="#6e6e6e"/></svg><div class="a" style="left:0px;top:905px;width:1752px;height:1px;background:#fbfbfb;"></div><svg class="a" style="left:1230.6px;top:54.3px;" width="15" height="15.5" viewBox="0 0 15 15.5"><path d="M0 0L14.6 7.7L0 15.4Z" fill="#59a66a"/></svg><svg class="a" style="left:1263.6px;top:52px;" width="22" height="21" viewBox="0 0 22 21"><path d="M9.2 4.6A6.7 6.7 0 0 0 9.2 18" fill="none" stroke="#c2c2c2" stroke-width="2.8"/><path d="M9 4.6H13" stroke="#c2c2c2" stroke-width="2.8"/><path d="M12.4 -0.8L20.2 5L12.4 10.6Z" fill="#c2c2c2"/><path d="M11.8 20L15.6 11.2L19.4 20M13.2 17.2H18" fill="none" stroke="#c2c2c2" stroke-width="2.2"/></svg><svg class="a" style="left:1303.5px;top:52.5px;" width="22" height="20" viewBox="0 0 22 20"><g fill="#c2c2c2"><rect x="0.3" y="1.7" width="17.4" height="2.5"/><rect x="0.3" y="6.3" width="17.4" height="2.5"/><rect x="0.3" y="10.5" width="8.8" height="2.4"/><rect x="0.3" y="14.5" width="11.4" height="2.6"/></g><path d="M14.2 11.3H16.3A3.7 3.7 0 0 1 16.3 18.7H14.6" fill="none" stroke="#c2c2c2" stroke-width="1.5"/><path d="M11.6 11.3L14.8 8.6V14Z" fill="#c2c2c2"/></svg><svg class="a" style="left:1342px;top:51.7px;" width="18" height="20.5" viewBox="0 0 18 20.5"><path d="M9 4.6C12.8 4.6 15.1 7.5 15.1 11.5V14.5C15.1 18 12.4 20.2 9 20.2C5.6 20.2 2.9 18 2.9 14.5V11.5C2.9 7.5 5.2 4.6 9 4.6Z" fill="#59a66a"/><path d="M4.2 0.9L9 5.5M13.8 0.9L9 5.5" stroke="#59a66a" stroke-width="2.2"/><path d="M0 6.9H4M14 6.9H18M0 11.6H4M14 11.6H18M0 16.1H4M14 16.1H18" stroke="#59a66a" stroke-width="2.1"/><path d="M6.3 9.4H11.7M6.3 13.9H11.7" stroke="#f2f2f2" stroke-width="1.9"/></svg><svg class="a" style="left:1378.4px;top:53px;" width="22" height="20" viewBox="0 0 22 20"><path d="M0.2 1.8L7.3 0.2L14.6 1.8V6.6L11.9 7.6V16.2C10.3 17 8.7 17.3 7.3 17C2.8 15.5 0.2 11.7 0.2 7Z" fill="#c2c2c2"/><path d="M11.9 7.8L21.4 13.8L11.9 19.7Z" fill="#c2c2c2"/></svg><div class="a" style="left:1410.8px;top:45.5px;width:53.7px;height:31.5px;background:#dedede;border-radius:5px"></div><div class="a" style="left:1443.3px;top:45.5px;width:1px;height:31.5px;background:#c9c9c9;"></div><svg class="a" style="left:1416px;top:53px;" width="22" height="15" viewBox="0 0 22 15"><path d="M2.72 14.66A8.4 8.4 0 0 1 5.58 5.58" fill="none" stroke="#59a66a" stroke-width="3.6"/><path d="M9.00 3.98A8.4 8.4 0 0 1 18.78 14.66" fill="none" stroke="#6b6b6b" stroke-width="3.6"/><path d="M4.6 3.6L13.4 11.4Q13.6 14.6 10.6 14.2Z" fill="#6b6b6b"/></svg><svg class="a" style="left:1448.8px;top:59.8px;" width="11.5" height="5.5" viewBox="0 0 11.5 5.5"><path d="M0 0H11.5L5.75 5.5Z" fill="#6e6e6e"/></svg><svg class="a" style="left:1478px;top:51.2px;" width="18" height="20.5" viewBox="0 0 18 20.5"><path d="M9 4.6C12.8 4.6 15.1 7.5 15.1 11.5V14.5C15.1 18 12.4 20.2 9 20.2C5.6 20.2 2.9 18 2.9 14.5V11.5C2.9 7.5 5.2 4.6 9 4.6Z" fill="#59a66a"/><path d="M4.2 0.9L9 5.5M13.8 0.9L9 5.5" stroke="#59a66a" stroke-width="2.2"/><path d="M0 6.9H4M14 6.9H18M0 11.6H4M14 11.6H18M0 16.1H4M14 16.1H18" stroke="#59a66a" stroke-width="2.1"/><path d="M6.3 9.4H11.7M6.3 13.9H11.7" stroke="#f2f2f2" stroke-width="1.9"/></svg><div class="a" style="left:1490px;top:63px;width:10px;height:7px;background:#6e6e6e;"></div><div class="a" style="left:1518px;top:54.3px;width:14px;height:15.5px;background:#c8c8c8;"></div><div class="a" style="left:1548.4px;top:47px;width:1.2px;height:28px;background:#d3d3d3;"></div><svg class="a" style="left:1556.5px;top:48.5px;" width="34.24" height="25.68" viewBox="0 0 34.24 25.68"><g transform="scale(1.07)"><path d="M5.5 20.3C5 15 6.5 11 9 9.5C12 7.5 17 7.5 21 9.8C22.5 10.5 24.3 10.2 24.8 8.6C25.2 7.2 24.3 6 23 6.1C22.2 6.2 21.7 6.6 21.4 7.1L20.8 5.8C21.9 4.6 24 4.2 25.6 5.3C27.2 6.6 27.2 9.6 25.6 12.5C24.5 14.3 22.2 15.2 21.2 17.2L20.7 20.3L18.8 20.6C18 18.2 15 17.8 13.8 20.3L12.6 20.6C11.6 18.2 8.2 17.8 7.2 20.3Z" fill="#6e6e6e"/><path d="M9.6 10.6Q11.2 14.6 14.8 11.6" fill="none" stroke="#f2f2f2" stroke-opacity="0.55" stroke-width="1.3"/><circle cx="19.7" cy="11.5" r="0.9" fill="#f2f2f2" fill-opacity="0.6"/><path d="M17.4 16.2L20.1 18.9L25.8 12.6" fill="none" stroke="#3a8fd8" stroke-width="2.4"/></g></svg><svg class="a" style="left:1603.5px;top:52.5px;" width="19" height="19" viewBox="0 0 19 19"><path d="M12 13V1H1V15.5H8" fill="none" stroke="#6e6e6e" stroke-width="2"/><path d="M8.6 15.5A5.4 5.4 0 0 1 19.2 15.5Z" fill="#3ec17a"/><path d="M9.8 9.3L11.2 11.4M18 9.3L16.6 11.4" stroke="#3ec17a" stroke-width="1.2"/></svg><div class="a" style="left:1634.4px;top:47px;width:1.2px;height:28px;background:#d3d3d3;"></div><svg class="a" style="left:1649.6px;top:51.5px;" width="20" height="20" viewBox="0 0 20 20"><circle cx="8.3" cy="8.3" r="6.8" fill="none" stroke="#6e6e6e" stroke-width="2.6"/><path d="M13.2 13.2L18.6 18.6" stroke="#6e6e6e" stroke-width="2.8"/></svg><svg class="a" style="left:1688.7px;top:52.4px;" width="18" height="18" viewBox="0 0 18 18"><g transform="translate(9 9)" fill="#6e6e6e"><path d="M-1.8 -8.9H1.8L2.3 -6.3L4.4 -5.1L6.8 -6.3L8.6 -3.1L6.5 -1.4V1.4L8.6 3.1L6.8 6.3L4.4 5.1L2.3 6.3L1.8 8.9H-1.8L-2.3 6.3L-4.4 5.1L-6.8 6.3L-8.6 3.1L-6.5 1.4V-1.4L-8.6 -3.1L-6.8 -6.3L-4.4 -5.1L-2.3 -6.3Z"/><circle r="3" fill="#f2f2f2"/></g></svg><svg class="a" style="left:1725px;top:51.6px;" width="21" height="21" viewBox="0 0 21 21"><circle cx="10.5" cy="10.5" r="10.3" fill="#6e6e6e"/><circle cx="10.5" cy="7.8" r="3.8" fill="#f2f2f2"/><path d="M3.8 17C5 13.5 7.5 12.5 10.5 12.5C13.5 12.5 16 13.5 17.2 17A9 9 0 0 1 3.8 17Z" fill="#f2f2f2"/></svg></div><div class="a" style="left:0;top:0;width:1999px;height:908px;will-change:transform"><div class="a" style="left:1442.5px;top:68px;width:523.5px;height:81px;background:#f0f0f0;border:1px solid #6a6a6a;border-top:2px solid #1e1e1e;border-bottom:1.6px solid #333;box-shadow:-1px 6px 16px rgba(0,0,0,0.40)"></div><svg class="a" style="left:1461.4px;top:82.4px;" width="22" height="15" viewBox="0 0 22 15"><path d="M2.72 14.66A8.4 8.4 0 0 1 5.58 5.58" fill="none" stroke="#c4c4c4" stroke-width="3.6"/><path d="M9.00 3.98A8.4 8.4 0 0 1 18.78 14.66" fill="none" stroke="#c4c4c4" stroke-width="3.6"/><path d="M4.6 3.6L13.4 11.4Q13.6 14.6 10.6 14.2Z" fill="#c4c4c4"/></svg><div class="a" style="font:normal normal 19.5px/19.5px 'Liberation Sans';color:#9b9b9b;letter-spacing:0.207px;left:1490.40px;top:84.00px;">Profiler: Run &#x27;app&#x27; as profileable (low overhead)</div><svg class="a" style="left:1461.4px;top:113.8px;" width="22" height="15" viewBox="0 0 22 15"><path d="M2.72 14.66A8.4 8.4 0 0 1 2.64 10.03" fill="none" stroke="#2f9ad8" stroke-width="3.6"/><path d="M2.64 10.03A8.4 8.4 0 0 1 14.69 4.78" fill="none" stroke="#f0a30a" stroke-width="3.6"/><path d="M15.92 5.58A8.4 8.4 0 0 1 18.78 14.66" fill="none" stroke="#6b6b6b" stroke-width="3.6"/><path d="M17 3.6L11 14.2Q8.4 13.6 8.6 11.4Z" fill="#6b6b6b"/></svg><div class="a" style="font:normal normal 19.5px/19.5px 'Liberation Sans';color:#1a1a1a;letter-spacing:0.259px;left:1490.40px;top:114.00px;">Profiler: Run &#x27;app&#x27; as debuggable (complete data)</div></div></body></html>
